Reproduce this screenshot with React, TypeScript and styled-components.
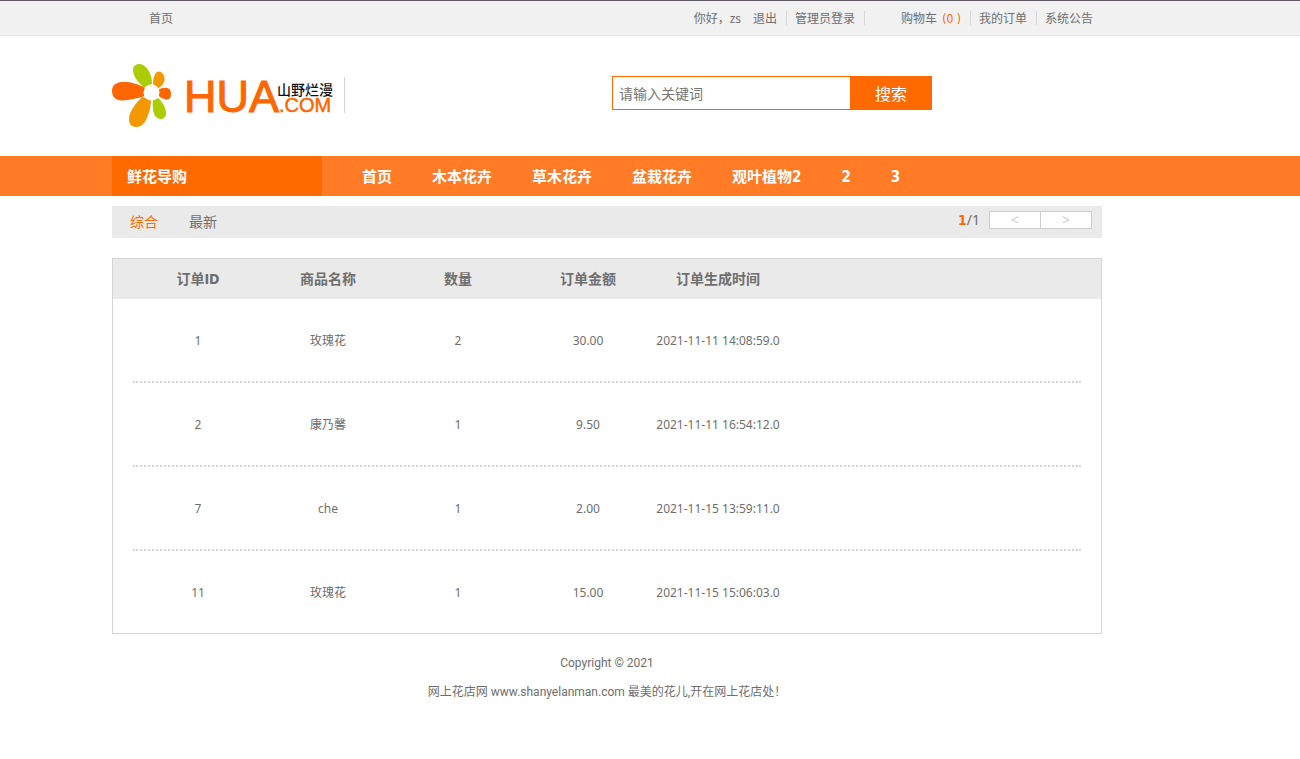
import React from "react";
import styled, { createGlobalStyle } from "styled-components";

const orange = "#ff6a00";
const grey = "#6e6e6e";
const line = "#d5d5d5";
const boldFont = `"DejaVu Sans Condensed", "Noto Sans CJK SC", sans-serif`;

const GlobalStyle = createGlobalStyle`
  * { box-sizing: border-box; }
  body {
    margin: 0;
    background: #fff;
    color: ${grey};
    font: 12px/20px "Noto Sans", "Noto Sans CJK SC", sans-serif;
  }
  a { color: inherit; text-decoration: none; }
  ul { margin: 0; padding: 0; list-style: none; }
  p { margin: 0; }
  button, input { font-family: inherit; }
`;

const Container = styled.div`
  max-width: 1102px;
  padding-left: 112px;
`;

const TopBar = styled.nav`
  background: #f1f1f1;
  border-top: 1px solid #5f5a62;
  border-bottom: 1px solid #e3e3e3;
`;

const TopRow = styled(Container)`
  display: flex;
  align-items: center;
  justify-content: space-between;
  height: 34px;
`;

const TopList = styled.ul`
  display: flex;
  align-items: center;
`;

const TopItem = styled.li<{ $divided?: boolean; $indent?: number }>`
  padding: 2px 9px 0 8px;
  margin-left: ${(p) => p.$indent ?? 0}px;
  line-height: 12px;
  white-space: pre;
  border-left: 1px solid ${(p) => (p.$divided ? line : "transparent")};
`;

const TopGap = styled.li`
  width: 28px;
  height: 14px;
  border-left: 1px solid ${line};
`;

const CartCount = styled.span`
  padding-left: 2px;
  color: ${orange};
  font-family: "DejaVu Sans Condensed", sans-serif;
`;

const Header = styled(Container)`
  display: flex;
  align-items: flex-start;
  gap: 267px;
  height: 120px;
  padding-top: 28px;
`;

const LogoLink = styled.a`
  display: block;
  line-height: 0;
`;

const SearchForm = styled.form`
  display: flex;
  width: 320px;
  height: 34px;
  margin-top: 12px;
`;

const SearchInput = styled.input`
  flex: 1;
  min-width: 0;
  padding: 0 6px;
  border: 1px solid ${orange};
  border-right: 0;
  border-radius: 0;
  outline: 0;
  font-size: 14px;
  &::placeholder { color: #757575; opacity: 1; }
`;

const SearchButton = styled.button`
  width: 82px;
  padding: 0;
  border: 0;
  background: ${orange};
  color: #fff;
  font-size: 16px;
`;

const NavBar = styled.nav`
  background: #ff7b26;
`;

const NavRow = styled(Container)`
  display: flex;
  height: 40px;
  color: #fff;
  font: bold 15px/42px ${boldFont};
`;

const NavTitle = styled.div`
  width: 210px;
  padding-left: 15px;
  background: ${orange};
`;

const NavList = styled.ul`
  display: flex;
  gap: 40px;
  padding-left: 40px;
`;

const Filters = styled.div`
  display: flex;
  justify-content: space-between;
  height: 32px;
  margin-top: 10px;
  padding: 0 10px 0 18px;
  background: #eaeaea;
  font-size: 14px;
  line-height: 32px;
`;

const Sorts = styled.div`
  display: flex;
  gap: 31px;
`;

const SortLink = styled.a<{ $active?: boolean }>`
  color: ${(p) => (p.$active ? orange : grey)};
`;

const Pager = styled.div`
  display: flex;
  align-items: flex-start;
  padding-top: 5px;
  line-height: 18px;
`;

const PageCount = styled.span`
  margin-right: 9px;
  b {
    color: ${orange};
    font-family: ${boldFont};
  }
`;

const PageButton = styled.button`
  width: 52px;
  height: 18px;
  padding: 0;
  border: 1px solid #ccc;
  background: #fff;
  color: #ccc;
  font-size: 14px;
  line-height: 16px;
  & + & { margin-left: -1px; }
`;

const Orders = styled.table`
  display: block;
  margin-top: 20px;
  border: 1px solid ${line};
  text-align: center;
  thead, tbody { display: block; }
  tr { display: flex; }
  thead tr {
    padding: 0 20px;
    background: #eaeaea;
    font: bold 14px/40px ${boldFont};
  }
  tbody tr {
    margin: 0 20px;
    padding-top: 2px;
    border-bottom: 2px dotted ${line};
    line-height: 80px;
  }
  tbody tr:last-child { border-bottom: 0; }
  th, td {
    width: 130px;
    padding: 0;
    white-space: nowrap;
  }
`;

const Footer = styled.footer`
  padding: 19px 0 48px;
  font-family: Roboto, "Noto Sans CJK SC", sans-serif;
  text-align: center;
  p + p { margin-top: 9px; }
`;

const navItems = ["首页", "木本花卉", "草木花卉", "盆栽花卉", "观叶植物2", "2", "3"];
const columns = ["订单ID", "商品名称", "数量", "订单金额", "订单生成时间"];
const orders = [
  ["1", "玫瑰花", "2", "30.00", "2021-11-11 14:08:59.0"],
  ["2", "康乃馨", "1", "9.50", "2021-11-11 16:54:12.0"],
  ["7", "che", "1", "2.00", "2021-11-15 13:59:11.0"],
  ["11", "玫瑰花", "1", "15.00", "2021-11-15 15:06:03.0"],
];

function Logo() {
  return (
    <svg width="233" height="64" viewBox="0 0 233 64" role="img" aria-label="HUA.COM 山野烂漫">
      <path fill="#aacd06" d="M21 6C21 1 25 0 28 0C35 1 40 10 40 20L32 24C27 19 21 13 21 6Z" />
      <path fill="#f39800" d="M41 20C41 14 43 7.500 47 7.500C51 8 53 13 52.500 16C52 20 49 23 45 25Z" />
      <path fill="#ff6600" d="M33 24C25 19 17 17.500 10 18C3 18.500 0 22 0 27C0 33 4 37 11 36.500C19 36 26 34 33 32Z" />
      <path fill="#ff6600" d="M46 26C49 24 52 23.500 55 24C58 24.500 59 27 59 30C59 34 57 36 54 35.500C50 35 48 33 46 31Z" />
      <path fill="#f39800" d="M30 33C26 37 20 44 17.500 51C16 58 18 63 24 63C31 63 34 57 36 51C38 46 39 41 39 35Z" />
      <path fill="#aacd06" d="M46 34C50 37 54 44 54 49C54 53 52 55 48 55C42 54 40 47 41 36Z" />
      <circle cx="39.500" cy="28.500" r="8" fill="#fff" />
      <text x="72" y="48" fill="#ff6600" stroke="#ff6600" strokeWidth="1" fontFamily="Liberation Sans, sans-serif" fontSize="45">HUA</text>
      <text x="165" y="31" fill="#111" fontFamily="Noto Sans CJK SC, sans-serif" fontSize="14" fontWeight="500">山野烂漫</text>
      <text x="167" y="48" fill="#ff6600" stroke="#ff6600" strokeWidth="0.500" fontFamily="Liberation Sans, sans-serif" fontSize="20">.COM</text>
      <path stroke={line} d="M232.500 13V49" />
    </svg>
  );
}

export default function App() {
  return (
    <>
      <GlobalStyle />
      <TopBar>
        <TopRow>
          <TopList>
            <TopItem $indent={28}><a href="#home">首页</a></TopItem>
          </TopList>
          <TopList>
            <TopItem>你好，zs</TopItem>
            <TopItem $indent={-6}><a href="#logout">退出</a></TopItem>
            <TopItem $divided><a href="#admin">管理员登录</a></TopItem>
            <TopGap />
            <TopItem><a href="#cart">购物车 <CartCount>(0 )</CartCount></a></TopItem>
            <TopItem $divided><a href="#orders">我的订单</a></TopItem>
            <TopItem $divided><a href="#notice">系统公告</a></TopItem>
          </TopList>
        </TopRow>
      </TopBar>
      <Header as="header">
        <LogoLink href="#home"><Logo /></LogoLink>
        <SearchForm>
          <SearchInput type="text" aria-label="关键词" placeholder="请输入关键词" />
          <SearchButton type="button">搜索</SearchButton>
        </SearchForm>
      </Header>
      <NavBar>
        <NavRow>
          <NavTitle>鲜花导购</NavTitle>
          <NavList>
            {navItems.map((item) => (
              <li key={item}><a href="#category">{item}</a></li>
            ))}
          </NavList>
        </NavRow>
      </NavBar>
      <Container as="main">
        <Filters>
          <Sorts>
            <SortLink href="#all" $active>综合</SortLink>
            <SortLink href="#newest">最新</SortLink>
          </Sorts>
          <Pager>
            <PageCount><b>1</b>/1</PageCount>
            <PageButton type="button" aria-label="上一页">&lt;</PageButton>
            <PageButton type="button" aria-label="下一页">&gt;</PageButton>
          </Pager>
        </Filters>
        <Orders>
          <thead>
            <tr>{columns.map((name) => <th key={name} scope="col">{name}</th>)}</tr>
          </thead>
          <tbody>
            {orders.map((order) => (
              <tr key={order[0]}>
                {order.map((value, i) => <td key={columns[i]}>{value}</td>)}
              </tr>
            ))}
          </tbody>
        </Orders>
        <Footer>
          <p>Copyright © 2021</p>
          <p>网上花店网 www.shanyelanman.com 最美的花儿,开在网上花店处！</p>
        </Footer>
      </Container>
    </>
  );
}
